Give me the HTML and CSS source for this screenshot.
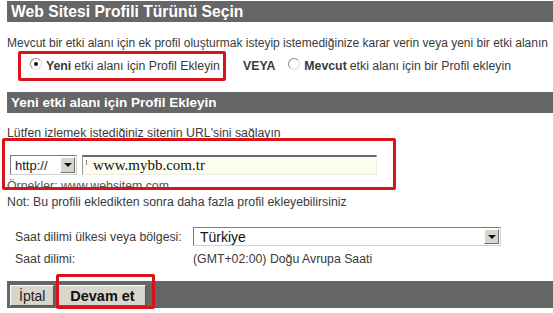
FILE: index.html
```html
<!DOCTYPE html>
<html lang="tr">
<head>
    <meta charset="UTF-8">
    <title>Web Sitesi Profili</title>
    <link rel="stylesheet" href="styles.css">
</head>
<body>
<div class="page">
    <div class="bar big">Web Sitesi Profili Türünü Seçin</div>
    <p class="line intro">Mevcut bir etki alanı için ek profil oluşturmak isteyip istemediğinize karar verin veya yeni bir etki alanın</p>

    <div class="choices">
        <label class="choice marked"><span class="radio checked"></span><b>Yeni</b> etki alanı için Profil Ekleyin</label>
        <span class="or">VEYA</span>
        <label class="choice"><span class="radio"></span><b>Mevcut</b> etki alanı için bir Profil ekleyin</label>
    </div>

    <div class="bar">Yeni etki alanı için Profil Ekleyin</div>
    <p class="line ask">Lütfen izlemek istediğiniz sitenin URL'sini sağlayın</p>

    <div class="url-block">
        <div class="url-row">
            <div class="dropdown proto"><span class="value">http://</span><span class="arrow"></span></div>
            <div class="url-input"><span class="caret"></span>www.mybb.com.tr</div>
        </div>
        <p class="line hint">Örnekler: www.websitem.com</p>
        <span class="mark url-mark"></span>
    </div>
    <p class="line note">Not: Bu profili ekledikten sonra daha fazla profil ekleyebilirsiniz</p>

    <div class="tz">
        <span class="tz-label">Saat dilimi ülkesi veya bölgesi:</span>
        <div class="dropdown country"><span class="value">Türkiye</span><span class="arrow"></span></div>
        <span class="tz-label">Saat dilimi:</span>
        <span class="tz-value">(GMT+02:00) Doğu Avrupa Saati</span>
    </div>

    <div class="bar footer">
        <button class="btn">İptal</button>
        <button class="btn primary">Devam et</button>
        <span class="mark btn-mark"></span>
    </div>
</div>
</body>
</html>
```

FILE: styles.css
```css
body {
    margin: 0;
    font-family: "Liberation Sans", Arial, sans-serif;
    font-size: 12.3px;
    color: #3a3a3a;
    background: #fff;
    overflow: hidden;
}

.page {
    width: 553px;
    height: 313px;
    padding-top: 1px;
    box-sizing: border-box;
    overflow: hidden;
}

.bar {
    margin-left: 7px;
    height: 21px;
    line-height: 21px;
    padding-left: 4px;
    background-color: #666666;
    color: #fff;
    font-size: 13.5px;
    font-weight: bold;
    white-space: nowrap;
}

.bar.big {
    font-size: 15.7px;
}

.line {
    margin: 0 0 0 7px;
    line-height: 14px;
    white-space: nowrap;
}

.intro {
    margin-top: 14px;
    font-size: 12px;
}

/* radio choices */
.choices {
    display: flex;
    align-items: center;
    height: 24px;
    margin: 4px 0 14px 18px;
}

.choice {
    display: flex;
    align-items: center;
    height: 23px;
    white-space: nowrap;
}

.choice b {
    margin-right: 3px;
}

.choice.marked {
    border: 3px solid #d8141b;
    border-radius: 2px;
    padding: 0 6px 0 9px;
    width: 208px;
    box-sizing: border-box;
    height: 30px;
}

.radio {
    width: 10px;
    height: 10px;
    border-radius: 50%;
    border: 1px solid #8a8a8a;
    border-right-color: #dcdcdc;
    border-bottom-color: #dcdcdc;
    background: #fff;
    margin: -4px 4px 0 0;
    position: relative;
    flex: none;
}

.radio.checked::after {
    content: "";
    position: absolute;
    left: 3px;
    top: 3px;
    width: 4px;
    height: 4px;
    border-radius: 50%;
    background: #111;
}

.or {
    font-weight: bold;
    margin: 0 13px 0 17px;
}

.ask {
    margin-top: 13px;
}

/* url entry */
.url-block {
    position: relative;
    margin-top: 15px;
}

.url-row {
    display: flex;
    align-items: center;
    gap: 5px;
    margin-left: 10px;
}

.dropdown {
    display: flex;
    align-items: center;
    height: 20px;
    box-sizing: border-box;
    border: 1px solid #7a7a7a;
    border-right-color: #d0d0d0;
    border-bottom-color: #d0d0d0;
    background: #fff;
    color: #222;
    font-size: 13px;
}

.dropdown .value {
    flex: 1;
    padding-left: 4px;
}

.dropdown .arrow {
    width: 15px;
    height: 16px;
    margin-right: 1px;
    box-sizing: border-box;
    background: #d8d6cf;
    border: 1px solid #fff;
    border-right-color: #707070;
    border-bottom-color: #707070;
    position: relative;
}

.dropdown .arrow::after {
    content: "";
    position: absolute;
    left: 3px;
    top: 5px;
    border-left: 4px solid transparent;
    border-right: 4px solid transparent;
    border-top: 4px solid #111;
}

.proto {
    width: 67px;
}

.url-input {
    width: 295px;
    height: 20px;
    box-sizing: border-box;
    border-top: 2px solid #6a6a6a;
    border-left: 1px solid #9a9a9a;
    border-right: 1px solid #eeeee4;
    border-bottom: 1px solid #eeeee4;
    background: #fdfdef;
    color: #111;
    font-family: "Liberation Serif", "Times New Roman", serif;
    font-size: 15px;
    line-height: 17px;
    padding-left: 4px;
    display: flex;
    align-items: center;
}

.caret {
    width: 1px;
    height: 5px;
    background: #888;
    margin: -6px 6px 0 -1px;
}

.hint {
    margin-top: 4px;
    color: #555;
}

.note {
    margin-top: 2px;
}

/* annotation boxes */
.mark {
    position: absolute;
    border: 3px solid #d8141b;
    border-radius: 2px;
    pointer-events: none;
}

.url-mark {
    left: 2px;
    top: -17px;
    width: 388px;
    height: 46px;
}

/* time zone */
.tz {
    display: grid;
    grid-template-columns: 178px 308px;
    row-gap: 6px;
    align-items: center;
    margin: 18px 0 0 15px;
}

.country {
    height: 19px;
    font-size: 14px;
    color: #111;
}

.country .value {
    padding-left: 6px;
}

.country .arrow {
    height: 15px;
}

/* footer */
.footer {
    position: relative;
    height: 27px;
    margin-top: 15px;
    padding-left: 3px;
    display: flex;
    align-items: center;
    gap: 4px;
}

.btn {
    height: 21px;
    padding: 0 8px;
    background: #d8d5cd;
    border: 1px solid #fff;
    border-right-color: #555;
    border-bottom-color: #555;
    font-family: "Liberation Sans", Arial, sans-serif;
    font-size: 14px;
    color: #222;
    margin-top: 2px;
}

.btn.primary {
    width: 88px;
    font-weight: bold;
    font-size: 14.5px;
    color: #111;
}

.btn-mark {
    left: 49px;
    top: -7px;
    width: 93px;
    height: 29px;
}
```
